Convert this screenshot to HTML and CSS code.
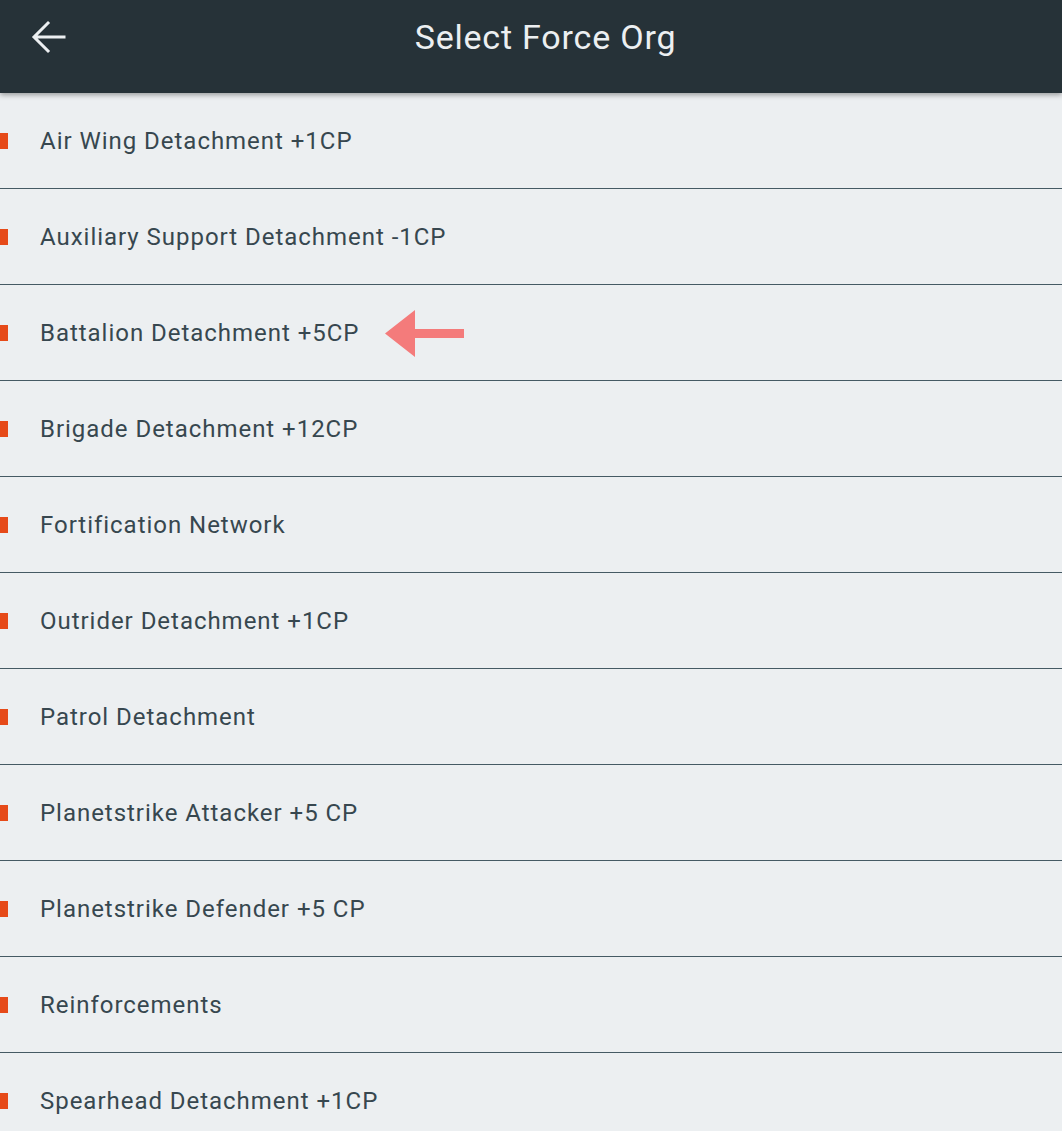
FILE: index.html
```html
<!DOCTYPE html>
<html>
<head>
<meta charset="utf-8">
<link rel="stylesheet" href="styles.css">
</head>
<body>
<header class="toolbar">
  <button class="back" aria-label="Back">
    <svg width="48" height="48" viewBox="0 0 24 24"><path d="M20 12H5.5M12 5l-7 7 7 7" fill="none" stroke="#eceff1" stroke-width="1.5" stroke-linecap="square"/></svg>
  </button>
  <h1 class="title">Select Force Org</h1>
</header>
<ul class="list">
  <li class="item"><span class="mark"></span><span class="label">Air Wing Detachment +1CP</span></li>
  <li class="item"><span class="mark"></span><span class="label">Auxiliary Support Detachment -1CP</span></li>
  <li class="item"><span class="mark"></span><span class="label">Battalion Detachment +5CP</span>
    <svg class="pointer" width="80" height="48" viewBox="0 0 80 48"><path d="M0 23.5 L30 0 L30 19 L79 19 L79 28 L30 28 L30 47 Z" fill="#f47b7b"/></svg>
  </li>
  <li class="item"><span class="mark"></span><span class="label">Brigade Detachment +12CP</span></li>
  <li class="item"><span class="mark"></span><span class="label">Fortification Network</span></li>
  <li class="item"><span class="mark"></span><span class="label">Outrider Detachment +1CP</span></li>
  <li class="item"><span class="mark"></span><span class="label">Patrol Detachment</span></li>
  <li class="item"><span class="mark"></span><span class="label">Planetstrike Attacker +5 CP</span></li>
  <li class="item"><span class="mark"></span><span class="label">Planetstrike Defender +5 CP</span></li>
  <li class="item"><span class="mark"></span><span class="label">Reinforcements</span></li>
  <li class="item"><span class="mark"></span><span class="label">Spearhead Detachment +1CP</span></li>
</ul>
</body>
</html>
```
FILE: styles.css
```css
html, body {
  margin: 0;
  padding: 0;
  background: #eceff1;
  font-family: Roboto, "Noto Sans", sans-serif;
  overflow: hidden;
}
.toolbar {
  position: relative;
  z-index: 2;
  height: 93px;
  background: #263238;
  box-shadow: 0 2px 5px rgba(0,0,0,0.35);
  display: flex;
  align-items: center;
  justify-content: center;
}
.back {
  position: absolute;
  left: 24px;
  top: 13px;
  width: 48px;
  height: 48px;
  padding: 0;
  border: 0;
  background: none;
  display: flex;
}
.title {
  margin: 0 0 20px 29px;
  font-weight: 400;
  font-size: 34px;
  color: #eceff1;
  letter-spacing: 0.8px;
}
.list {
  list-style: none;
  margin: 0;
  padding: 0;
}
.item {
  height: 95px;
  border-bottom: 1px solid #455a64;
  display: flex;
  align-items: center;
  gap: 32px;
}
.mark {
  width: 8px;
  height: 16px;
  background: #e64a19;
  flex: none;
}
.label {
  font-size: 24px;
  color: #37474f;
  letter-spacing: 0.97px;
}
.pointer {
  margin-left: -6px;
  margin-top: 2px;
}
```
